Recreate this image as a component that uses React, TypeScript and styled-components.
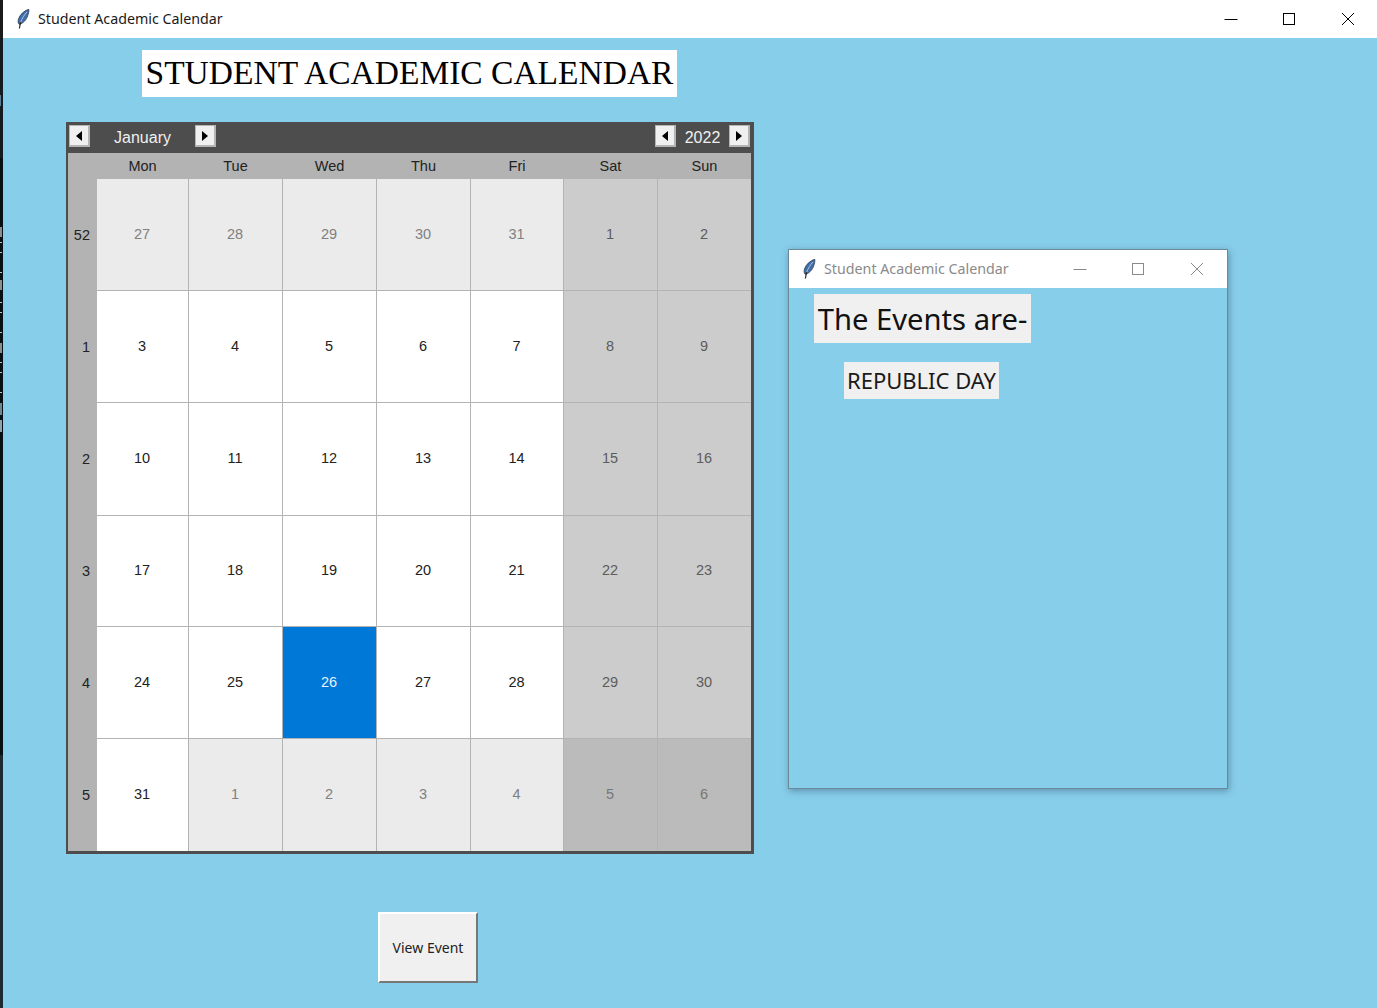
import React from "react";
import styled, { createGlobalStyle } from "styled-components";

const GlobalStyle = createGlobalStyle`
  html, body {
    margin: 0;
    padding: 0;
    width: 1377px;
    height: 1008px;
    overflow: hidden;
    background: #0c1418;
  }
`;

const Desktop = styled.div`
  position: relative;
  width: 1377px;
  height: 1008px;
  display: flex;
  background: #0c1418;
`;

const MainWindow = styled.div`
  display: flex;
  flex-direction: column;
  flex: 1;
  height: 100%;
`;

const TitleBar = styled.div<{ $inactive?: boolean }>`
  display: flex;
  align-items: center;
  flex: none;
  height: 38px;
  padding-bottom: 1px;
  padding-left: 14px;
  box-sizing: border-box;
  background: #ffffff;
  color: ${({ $inactive }) => ($inactive ? "#8a8a8a" : "#1a1a1a")};
  font-family: "Noto Sans", sans-serif;
  font-size: 14.25px;
`;

const TitleText = styled.span`
  margin-left: 8px;
  margin-bottom: 1px;
  flex: 1;
  white-space: nowrap;
`;

const WinButton = styled.div<{ $w: number }>`
  width: ${({ $w }) => $w}px;
  height: 38px;
  display: flex;
  align-items: center;
  justify-content: center;
  flex: none;
`;

const MainBody = styled.div`
  flex: 1;
  background: #87ceeb;
  display: flex;
  flex-direction: column;
  align-items: flex-start;
  padding: 12px 0 0 63px;
`;

const Heading = styled.div`
  margin-left: 76px;
  width: 535px;
  height: 47px;
  background: #ffffff;
  color: #000000;
  font-family: "Liberation Serif", serif;
  font-size: 33.5px;
  line-height: 46px;
  text-align: center;
  white-space: nowrap;
`;

const Calendar = styled.div`
  margin-top: 25px;
  width: 688px;
  height: 732px;
  box-sizing: border-box;
  border: 2px solid #4d4d4d;
  border-bottom-width: 3px;
  border-right-width: 3px;
  background: #b3b3b3;
  font-family: "Liberation Sans", sans-serif;
  font-size: 14.5px;
  display: flex;
  flex-direction: column;
`;

const CalHeader = styled.div`
  height: 29px;
  flex: none;
  box-sizing: border-box;
  background: #4d4d4d;
  color: #f0f0f0;
  display: flex;
  align-items: flex-start;
  font-size: 16px;
  padding: 1px 1px 0;
`;

const Arrow = styled.div`
  width: 21px;
  height: 22px;
  box-sizing: border-box;
  background: #f0f0f0;
  border: 1px solid #b5b5b5;
  border-width: 1px 2px 2px 1px;
  display: flex;
  align-items: center;
  justify-content: center;
  flex: none;
`;

const MonthLabel = styled.div`
  width: 105px;
  line-height: 26px;
  text-align: center;
`;

const YearLabel = styled.div`
  width: 53px;
  line-height: 26px;
  text-align: center;
`;

const Spacer = styled.div`
  flex: 1;
`;

const Weekdays = styled.div`
  display: grid;
  grid-template-columns: 28px 91px 93px 93px 93px 92px 93px 93px;
  column-gap: 1px;
  height: 26px;
  flex: none;
  color: #222222;
  align-items: center;
  text-align: center;
`;

const Grid = styled.div`
  display: grid;
  grid-template-columns: 28px 91px 93px 93px 93px 92px 93px 93px;
  grid-template-rows: 111px 111px 112px 110px 111px 112px;
  gap: 1px;
`;

const WeekNo = styled.div`
  display: flex;
  align-items: center;
  justify-content: flex-end;
  padding-right: 6px;
  color: #222222;
`;

type CellKind = "day" | "other" | "weekend" | "otherWeekend" | "selected";

const cellBg: Record<CellKind, string> = {
  day: "#ffffff",
  other: "#ebebeb",
  weekend: "#cccccc",
  otherWeekend: "#bbbbbb",
  selected: "#0078d7",
};

const cellFg: Record<CellKind, string> = {
  day: "#222222",
  other: "#808080",
  weekend: "#5c5c5c",
  otherWeekend: "#777777",
  selected: "#e8f2fb",
};

const Cell = styled.div<{ $kind: CellKind }>`
  display: flex;
  align-items: center;
  justify-content: center;
  padding-bottom: 2px;
  padding-right: 1px;
  box-sizing: border-box;
  background: ${({ $kind }) => cellBg[$kind]};
  color: ${({ $kind }) => cellFg[$kind]};
`;

const ViewButton = styled.div`
  margin: 58px 0 0 312px;
  width: 100px;
  height: 71px;
  box-sizing: border-box;
  background: #f0f0f0;
  border: 2px solid;
  border-color: #ffffff #777777 #777777 #ffffff;
  display: flex;
  align-items: center;
  justify-content: center;
  color: #222222;
  font-family: "Noto Sans", sans-serif;
  font-size: 14px;
`;

const PopupWindow = styled.div`
  position: absolute;
  left: 788px;
  top: 249px;
  width: 440px;
  height: 540px;
  box-sizing: border-box;
  border: 1px solid #6b8a99;
  box-shadow: 1px 2px 7px rgba(40, 70, 90, 0.45);
  display: flex;
  flex-direction: column;
`;

const PopupBody = styled.div`
  flex: 1;
  background: #87ceeb;
  display: flex;
  flex-direction: column;
  align-items: flex-start;
  padding: 6px 0 0 25px;
`;

const EventsTitle = styled.div`
  width: 217px;
  height: 49px;
  background: #f0f0f0;
  color: #111111;
  font-family: "Noto Sans", sans-serif;
  font-size: 29.2px;
  line-height: 51px;
  text-align: center;
  white-space: nowrap;
`;

const EventName = styled.div`
  margin: 19px 0 0 30px;
  width: 155px;
  height: 37px;
  background: #f0f0f0;
  color: #1a1a1a;
  font-family: "Noto Sans", sans-serif;
  font-size: 22px;
  line-height: 37px;
  text-align: center;
  white-space: nowrap;
`;

const Feather = () => (
  <svg width="13" height="20" viewBox="0 0 13 20">
    <path d="M11.8 0.3C7.2 1.6 3 5.4 1.5 10C0.8 12.4 1 14.2 2.2 15.4C6 14.6 9.4 11 10.8 6.6C11.6 4.2 12.1 2 11.8 0.3Z" fill="#3f6ea8" stroke="#1f2f48" strokeWidth="0.7" />
    <path d="M10 3C7.4 5.6 5 9.4 3.6 13.4" stroke="#b9cde4" strokeWidth="0.9" fill="none" />
    <path d="M3.6 13.2L2.4 19.5" stroke="#2a2a2a" strokeWidth="1.2" fill="none" />
  </svg>
);

const WinIcon = ({ kind, color }: { kind: "min" | "max" | "close"; color: string }) => (
  <svg width="14" height="14" viewBox="0 0 14 14" fill="none" stroke={color} strokeWidth="1">
    {kind === "min" && <path d="M0.5 7.5H13.5" />}
    {kind === "max" && <rect x="1.5" y="1.5" width="11" height="11" />}
    {kind === "close" && <path d="M1 1L13 13M13 1L1 13" />}
  </svg>
);

const Tri = ({ left }: { left?: boolean }) => (
  <svg width="6" height="10" viewBox="0 0 6 10">
    <path d={left ? "M6 0V10L0 5Z" : "M0 0V10L6 5Z"} fill="#000" />
  </svg>
);

// sliver of the window behind, visible at the left edge of the screenshot
const BehindStrip = () => (
  <svg width="3" height="1008" viewBox="0 0 3 1008" style={{ flex: "none" }}>
    <rect width="3" height="1008" fill="#071014" />
    <rect y="0" width="3" height="38" fill="#1b1b1b" />
    <rect y="38" width="3" height="120" fill="#141c20" />
    <rect y="755" width="3" height="253" fill="#1c2a32" />
    <rect y="95" width="1" height="11" fill="#5a7f96" />
    {[227, 280, 343].map((y) => (
      <rect key={y} y={y} width="2" height="10" fill="#8a8f90" />
    ))}
    {[242, 252, 272, 302, 312, 332, 362, 372, 392].map((y) => (
      <rect key={y} y={y} width="2" height="1" fill="#c0c4c6" />
    ))}
    <rect y="403" width="2" height="12" fill="#6d8794" />
    <rect y="420" width="2" height="12" fill="#8ea3ad" />
  </svg>
);

const weekdays = ["Mon", "Tue", "Wed", "Thu", "Fri", "Sat", "Sun"];

const weeks: { no: number; days: number[] }[] = [
  { no: 52, days: [27, 28, 29, 30, 31, 1, 2] },
  { no: 1, days: [3, 4, 5, 6, 7, 8, 9] },
  { no: 2, days: [10, 11, 12, 13, 14, 15, 16] },
  { no: 3, days: [17, 18, 19, 20, 21, 22, 23] },
  { no: 4, days: [24, 25, 26, 27, 28, 29, 30] },
  { no: 5, days: [31, 1, 2, 3, 4, 5, 6] },
];

const kindOf = (week: number, col: number, day: number): CellKind => {
  if (week === 4 && day === 26) return "selected";
  const other = (week === 0 && day > 20) || (week === 5 && day < 20);
  const weekend = col >= 5;
  if (week === 5 && weekend) return "otherWeekend";
  if (weekend) return "weekend";
  return other ? "other" : "day";
};

export default function App() {
  return (
    <Desktop>
      <GlobalStyle />
      <BehindStrip />
      <MainWindow>
        <TitleBar>
          <Feather />
          <TitleText>Student Academic Calendar</TitleText>
          <WinButton $w={58}><WinIcon kind="min" color="#000" /></WinButton>
          <WinButton $w={58}><WinIcon kind="max" color="#000" /></WinButton>
          <WinButton $w={59}><WinIcon kind="close" color="#000" /></WinButton>
        </TitleBar>
        <MainBody>
          <Heading>STUDENT ACADEMIC CALENDAR</Heading>
          <Calendar>
            <CalHeader>
              <Arrow><Tri left /></Arrow>
              <MonthLabel>January</MonthLabel>
              <Arrow><Tri /></Arrow>
              <Spacer />
              <Arrow><Tri left /></Arrow>
              <YearLabel>2022</YearLabel>
              <Arrow><Tri /></Arrow>
            </CalHeader>
            <Weekdays>
              <span />
              {weekdays.map((d) => (
                <span key={d}>{d}</span>
              ))}
            </Weekdays>
            <Grid>
              {weeks.map((w, i) => (
                <React.Fragment key={w.no}>
                  <WeekNo>{w.no}</WeekNo>
                  {w.days.map((d, c) => (
                    <Cell key={c} $kind={kindOf(i, c, d)}>{d}</Cell>
                  ))}
                </React.Fragment>
              ))}
            </Grid>
          </Calendar>
          <ViewButton>View Event</ViewButton>
        </MainBody>
      </MainWindow>
      <PopupWindow>
        <TitleBar $inactive>
          <Feather />
          <TitleText>Student Academic Calendar</TitleText>
          <WinButton $w={58}><WinIcon kind="min" color="#8a8a8a" /></WinButton>
          <WinButton $w={58}><WinIcon kind="max" color="#8a8a8a" /></WinButton>
          <WinButton $w={60}><WinIcon kind="close" color="#8a8a8a" /></WinButton>
        </TitleBar>
        <PopupBody>
          <EventsTitle>The Events are-</EventsTitle>
          <EventName>REPUBLIC DAY</EventName>
        </PopupBody>
      </PopupWindow>
    </Desktop>
  );
}
